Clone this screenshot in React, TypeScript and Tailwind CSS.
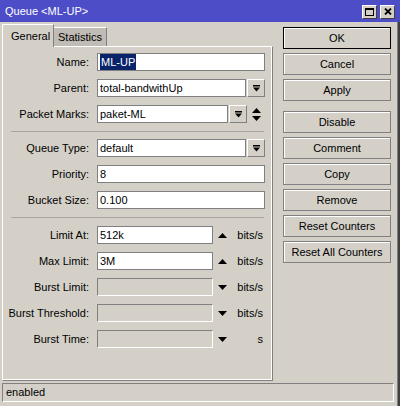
import React from 'react';

const font = "font-['Liberation_Sans',Arial,sans-serif]";

const DropIcon = () => (
  <svg width="7" height="7" viewBox="0 0 7 7">
    <rect x="0" y="0" width="7" height="1.5" fill="#000" />
    <polygon points="0,2.5 7,2.5 3.5,6.5" fill="#000" />
  </svg>
);

const DropButton = () => (
  <div className="w-[18px] h-[18px] flex items-center justify-center bg-[#d4d0c8] border border-t-white border-l-white border-b-[#808080] border-r-[#808080]">
    <DropIcon />
  </div>
);

const Field = ({ value, selected, disabled }: { value?: string; selected?: boolean; disabled?: boolean }) => (
  <div
    className={`flex-1 h-[18px] flex items-center px-[2px] border ${
      disabled
        ? 'bg-[#d4d0c8] border-t-[#808080] border-l-[#808080] border-b-white border-r-white'
        : 'bg-white border-[#808080]'
    }`}
  >
    {selected ? (
      <span className="bg-[#0a246a] text-white px-[1px] leading-[16px]">{value}</span>
    ) : (
      <span className="leading-[16px]">{value}</span>
    )}
  </div>
);

const Row = ({ label, children }: { label: string; children: React.ReactNode }) => (
  <div className="flex items-center h-[18px]">
    <div className="w-[86px] text-right whitespace-nowrap">{label}</div>
    <div className="ml-[8px] w-[168px] flex items-center">{children}</div>
  </div>
);

const Arrow = ({ up }: { up?: boolean }) => (
  <svg width="9" height="5" viewBox="0 0 9 5">
    {up ? <polygon points="0,5 9,5 4.5,0" fill="#000" /> : <polygon points="0,0 9,0 4.5,5" fill="#000" />}
  </svg>
);

const UnitRow = ({ label, value, up, disabled, unit }: { label: string; value?: string; up?: boolean; disabled?: boolean; unit: string }) => (
  <Row label={label}>
    <div className="w-[116px] flex">
      <Field value={value} disabled={disabled} />
    </div>
    <div className="ml-[4px] w-[10px] flex justify-center">
      <Arrow up={up} />
    </div>
    <div className="flex-1 text-right pr-[2px]">{unit}</div>
  </Row>
);

const Separator = ({ className = '' }: { className?: string }) => (
  <div className={`ml-[8px] w-[253px] h-px bg-[#a9a59e] ${className}`} />
);

const Btn = ({ label, def, className = '' }: { label: string; def?: boolean; className?: string }) => (
  <div
    className={`h-[22px] w-[108px] flex items-center justify-center bg-[#d4d0c8] border ${
      def ? 'border-black' : 'border-[#808080]'
    } shadow-[inset_1px_1px_0_#ffffff] ${className}`}
  >
    {label}
  </div>
);

export default function App() {
  return (
    <div className={`${font} text-[11px] text-black w-[400px] h-[406px] bg-[#d4d0c8] flex flex-col overflow-hidden`}>
      {/* title bar */}
      <div className="h-[22px] bg-[#4d4dc8] flex items-center pl-[5px] pr-[5px] text-white">
        <span className="flex-1">Queue &lt;ML-UP&gt;</span>
        <div className="flex gap-[3px] mt-[1px]">
          <div className="w-[15px] h-[14px] bg-[#d4d0c8] border border-t-white border-l-white border-b-[#404040] border-r-[#404040] flex items-center justify-center">
            <div className="w-[9px] h-[8px] border border-black border-t-2" />
          </div>
          <div className="w-[15px] h-[14px] bg-[#d4d0c8] border border-t-white border-l-white border-b-[#404040] border-r-[#404040] flex items-center justify-center">
            <svg width="8" height="7" viewBox="0 0 8 7">
              <path d="M1 0.5 L7 6.5 M7 0.5 L1 6.5" stroke="#000" strokeWidth="1.8" />
            </svg>
          </div>
        </div>
      </div>

      <div className="flex flex-1">
        <div className="flex-1 flex flex-col pr-[3px] border-r border-r-[#808080]">
          <div className="flex flex-1 pt-[2px]">
            {/* left: tabs + panel */}
            <div className="ml-[2px] w-[271px] flex flex-col">
              <div className="flex items-end h-[22px]">
                <div className="relative z-10 w-[52px] h-[23px] -mb-px bg-[#d4d0c8] border-t border-l border-t-white border-l-white border-r border-r-[#808080] pl-[8px] flex items-center">
                  General
                </div>
                <div className="w-[53px] h-[19px] bg-[#c0bcb5] border-t border-t-white border-r border-r-[#808080] flex items-center justify-center">
                  Statistics
                </div>
              </div>
              <div className="h-[335px] border border-[#808080] border-t-white border-l-white shadow-[inset_-1px_-1px_0_#ffffff] flex flex-col gap-[8px] pt-[6px]">
                <Row label="Name:">
                  <Field value="ML-UP" selected />
                </Row>
                <Row label="Parent:">
                  <Field value="total-bandwithUp" />
                  <div className="ml-[1px]">
                    <DropButton />
                  </div>
                </Row>
                <Row label="Packet Marks:">
                  <div className="w-[131px] flex">
                    <Field value="paket-ML" />
                  </div>
                  <div className="ml-[1px]">
                    <DropButton />
                  </div>
                  <div className="flex-1 flex justify-center">
                    <svg width="9" height="13" viewBox="0 0 9 13">
                      <polygon points="0,5 9,5 4.5,0" fill="#000" />
                      <polygon points="0,8 9,8 4.5,13" fill="#000" />
                    </svg>
                  </div>
                </Row>
                <Separator className="-mb-px" />
                <Row label="Queue Type:">
                  <Field value="default" />
                  <div className="ml-[1px]">
                    <DropButton />
                  </div>
                </Row>
                <Row label="Priority:">
                  <Field value="8" />
                </Row>
                <Row label="Bucket Size:">
                  <Field value="0.100" />
                </Row>
                <Separator />
                <UnitRow label="Limit At:" value="512k" up unit="bits/s" />
                <UnitRow label="Max Limit:" value="3M" up unit="bits/s" />
                <UnitRow label="Burst Limit:" disabled unit="bits/s" />
                <UnitRow label="Burst Threshold:" disabled unit="bits/s" />
                <UnitRow label="Burst Time:" disabled unit="s" />
              </div>
            </div>

            {/* right: buttons */}
            <div className="ml-[10px] pt-[3px] flex flex-col gap-[4px]">
              <Btn label="OK" def />
              <Btn label="Cancel" />
              <Btn label="Apply" />
              <Btn label="Disable" className="mt-[6px]" />
              <Btn label="Comment" />
              <Btn label="Copy" />
              <Btn label="Remove" />
              <Btn label="Reset Counters" />
              <Btn label="Reset All Counters" />
            </div>
          </div>

          {/* status bar */}
          <div className="mt-[2px] mb-[4px] ml-[2px] w-[392px] h-[19px] border border-t-[#808080] border-l-[#808080] border-b-white border-r-white flex items-center pl-[3px]">
            enabled
          </div>
        </div>
        <div className="w-[2px] bg-[#404040]" />
      </div>
    </div>
  );
}
